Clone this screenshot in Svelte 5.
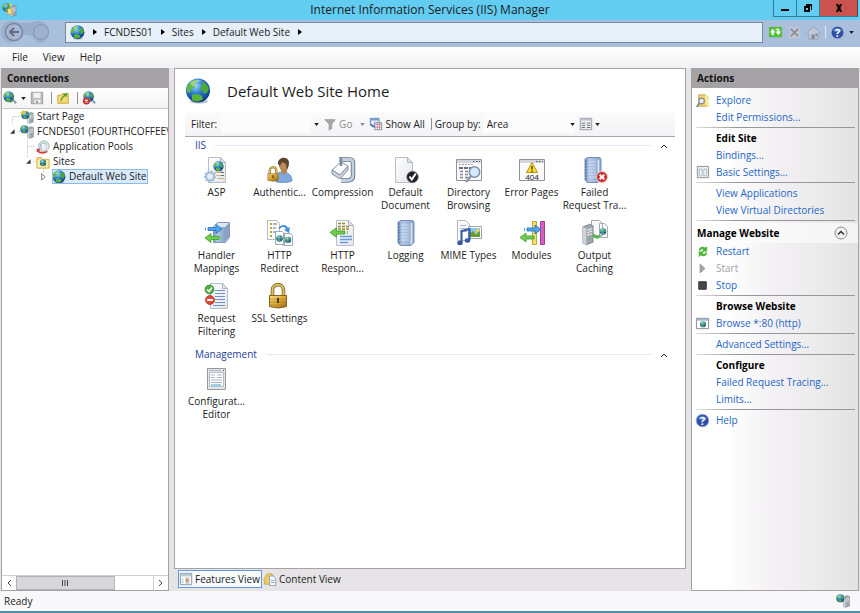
<script>
	let filter = $state('');
	let groupBy = $state('Area');
	let view = $state('features');

	const crumbs = ['FCNDES01', 'Sites', 'Default Web Site'];

	const tree = [
		{ label: 'Start Page', icon: 'start', level: 0, lines: 'M11.5 15V7.5H19' },
		{ label: 'FCNDES01 (FOURTHCOFFEE\\', icon: 'server', level: 0, lines: 'M17 7.5H20', open: true },
		{ label: 'Application Pools', icon: 'pools', level: 1, lines: 'M10.5 0V15M10.5 7.5H19' },
		{ label: 'Sites', icon: 'sites', level: 1, lines: 'M10.5 0V3M17 7.5H20', open: true },
		{ label: 'Default Web Site', icon: 'globe', level: 2, lines: 'M10.5 0V3', closed: true, selected: true }
	];

	const groups = [
		{
			name: 'IIS',
			items: [
				['ASP', 'asp'],
				['Authentic...', 'auth'],
				['Compression', 'compression'],
				['Default\nDocument', 'document'],
				['Directory\nBrowsing', 'directory'],
				['Error Pages', 'error'],
				['Failed\nRequest Tra...', 'failed'],
				['Handler\nMappings', 'handler'],
				['HTTP\nRedirect', 'redirect'],
				['HTTP\nRespon...', 'response'],
				['Logging', 'logging'],
				['MIME Types', 'mime'],
				['Modules', 'modules'],
				['Output\nCaching', 'caching'],
				['Request\nFiltering', 'filtering'],
				['SSL Settings', 'ssl']
			]
		},
		{ name: 'Management', items: [['Configurat...\nEditor', 'config']] }
	];

	const siteActions = [
		{ label: 'Explore', icon: 'explore' },
		{ label: 'Edit Permissions...' },
		{ line: true },
		{ title: 'Edit Site' },
		{ label: 'Bindings...' },
		{ label: 'Basic Settings...', icon: 'settings' },
		{ line: true },
		{ label: 'View Applications' },
		{ label: 'View Virtual Directories' },
		{ line: true }
	];

	const manageActions = [
		{ label: 'Restart', icon: 'restart' },
		{ label: 'Start', icon: 'play', disabled: true },
		{ label: 'Stop', icon: 'stop' },
		{ line: true },
		{ title: 'Browse Website' },
		{ label: 'Browse *:80 (http)', icon: 'browse' },
		{ line: true },
		{ label: 'Advanced Settings...' },
		{ line: true },
		{ title: 'Configure' },
		{ label: 'Failed Request Tracing...' },
		{ label: 'Limits...' },
		{ line: true },
		{ label: 'Help', icon: 'help' }
	];
</script>

{#snippet icon(name, size)}
	<svg class="icon {size}" aria-hidden="true">
		<use href="#{name}" />
		{#if name === 'error'}
			<text x="13" y="23" text-anchor="middle" font-size="8" fill="#202020">404</text>
		{:else if name === 'help'}
			<text x="7.500" y="11.500" text-anchor="middle" font-size="11" font-weight="700" fill="#fff">?</text>
		{/if}
	</svg>
{/snippet}

{#snippet caret()}
	<svg class="caret" viewBox="0 0 6 4" aria-hidden="true"><path d="M0 0h6L3 4z" fill="currentColor" /></svg>
{/snippet}

{#snippet actionList(rows)}
	<ul class="actions">
		{#each rows as row}
			{#if row.line}
				<li class="line"></li>
			{:else if row.title}
				<li class="action"><h3>{row.title}</h3></li>
			{:else}
				<li class="action">
					<span class="slot">
						{#if row.icon}{@render icon(row.icon, 'small')}{/if}
					</span>
					{#if row.disabled}
						<span class="disabled">{row.label}</span>
					{:else}
						<a href="#top">{row.label}</a>
					{/if}
				</li>
			{/if}
		{/each}
	</ul>
{/snippet}

<!-- Icon sprite -->
<svg class="sprite" width="0" height="0" aria-hidden="true">
	<defs>
		<radialGradient id="g-sea" cx=".4" cy=".3" r=".75">
			<stop offset="0" stop-color="#9fd8f7" />
			<stop offset=".45" stop-color="#2a78d0" />
			<stop offset="1" stop-color="#0b2f80" />
		</radialGradient>
		<linearGradient id="g-book" x2="1" y2="0">
			<stop offset="0" stop-color="#7f9cc4" />
			<stop offset=".3" stop-color="#b5c9e6" />
			<stop offset="1" stop-color="#86a2cb" />
		</linearGradient>
		<linearGradient id="g-gold" x2="1" y2="1">
			<stop offset="0" stop-color="#f8e08a" />
			<stop offset=".5" stop-color="#dca93a" />
			<stop offset="1" stop-color="#9a6c14" />
		</linearGradient>
		<linearGradient id="g-page" x2="1" y2="1">
			<stop offset="0" stop-color="#fff" />
			<stop offset="1" stop-color="#e3e6ee" />
		</linearGradient>
	</defs>
	<symbol id="globe" viewBox="0 0 26 26">
		<ellipse cx="14" cy="23.500" rx="9" ry="2" fill="#b8c4d2" />
		<circle cx="13" cy="12.500" r="12" fill="url(#g-sea)" />
		<path d="M4 6c3-4 7-5 9-4l-1 3-3 1 1 3-4 2-1 4-3-1c-1-3 0-6 2-8z" fill="#63bb3c" />
		<path d="M16 3c4 1 7 4 8 8l-2 4-3 1-1-3-3-1 1-4 2-2z" fill="#4caa3c" />
		<path d="M7 17c3-2 7-1 10 1l1 3c-3 3-8 3-11 1z" fill="#58b338" />
		<path d="M5 5c4-4 9-4 12-2-4 0-7 2-9 6z" fill="#fff" opacity=".35" />
	</symbol>
	<symbol id="page" viewBox="0 0 26 26">
		<path d="M4.500.5h12l5 5v20h-17z" fill="url(#g-page)" stroke="#b9bfc8" />
		<path d="M16.500.5v5h5z" fill="#dfe4ec" stroke="#b0b7c0" />
	</symbol>
	<symbol id="tower" viewBox="0 0 14 26">
		<path d="M1 4l8-3 4 2v19l-8 3-4-2z" fill="#9ea5ac" stroke="#646b72" stroke-width=".7" />
		<path d="M1 4l4 2v19l-4-2z" fill="#cfd4d8" />
		<path d="M6 8l6-2M6 11l6-2M6 14l6-2" stroke="#eef1f3" stroke-width="1.200" />
		<circle cx="9" cy="18" r="1" fill="#4cc83c" />
	</symbol>
	<symbol id="server" viewBox="0 0 16 16">
		<use href="#tower" x="8" y="1" width="8" height="15" />
		<use href="#globe" x="0" y="0" width="10" height="10" />
	</symbol>
	<symbol id="start" viewBox="0 0 16 16">
		<use href="#tower" x="8" y="2" width="8" height="14" />
		<use href="#globe" x="1" y="1" width="10" height="10" />
		<path d="M0 3l4-3 3 2-4 3z" fill="#f2c63b" />
	</symbol>
	<symbol id="pools" viewBox="0 0 16 16">
		<circle cx="9" cy="7" r="6" fill="#dfe9ec" stroke="#9bb0b4" />
		<path d="M4 5q4-4 8-1l-1 5-5 2z" fill="#96c8c0" />
		<use href="#page" x="5" y="3" width="8" height="10" />
		<path d="M1 12q6 5 12 1" stroke="#c9453f" stroke-width="2" fill="none" />
		<path d="M0 10l5 0-2 4z" fill="#c9453f" />
	</symbol>
	<symbol id="sites" viewBox="0 0 16 16">
		<path d="M1 3h5l1 2h8v10H1z" fill="#f3dd82" stroke="#cba94a" />
		<path d="M2 6h12v8H2z" fill="#fbefb0" />
		<use href="#globe" x="4" y="5" width="8" height="8" />
	</symbol>
	<symbol id="manager" viewBox="0 0 16 16">
		<use href="#globe" x="0" y="1" width="10" height="10" />
		<path d="M7 1l4 2-2 3z" fill="#f4ce3f" />
		<use href="#tower" x="8" y="3" width="8" height="13" />
		<path d="M6 7h4v6H6z" fill="#f5df78" stroke="#b99b35" stroke-width=".6" />
	</symbol>
	<symbol id="connect" viewBox="0 0 16 16">
		<path d="M10 9l5 5" stroke="#8ba0ac" stroke-width="2.500" />
		<use href="#globe" x="0" y="0" width="13" height="13" />
		<path d="M8 13l3-3" stroke="#3a9b4e" stroke-width="2" />
	</symbol>
	<symbol id="save" viewBox="0 0 16 16">
		<path d="M1.500 1.500h13v13h-13z" fill="#bdbdbf" stroke="#98989b" />
		<path d="M4 2h8v6H4zM5 10h7v4H5z" fill="#f2f2f3" />
		<path d="M7 11h2v3H7z" fill="#8b8b8e" />
	</symbol>
	<symbol id="up" viewBox="0 0 16 16">
		<path d="M2 5h4l1-2h7v11H2z" fill="#f4da72" stroke="#c9a03c" />
		<path d="M5 11c1-4 2-5 4-6L8 4l5-2-1 5-1-1c-3 1-4 3-5 6z" fill="#4ea52f" />
	</symbol>
	<symbol id="disconnect" viewBox="0 0 16 16">
		<path d="M10 9l5 5" stroke="#7fa3b5" stroke-width="2.500" />
		<use href="#globe" x="1" y="0" width="13" height="13" />
		<circle cx="5" cy="11.500" r="4" fill="#d03029" />
		<path d="M3.500 10l3 3m0-3l-3 3" stroke="#fff" stroke-width="1.300" />
	</symbol>
	<symbol id="asp" viewBox="0 0 26 26">
		<use href="#page" width="26" height="26" />
		<path d="M10 15.500h10M12 18.500h8M13 21.500h7" stroke="#c9b873" />
		<path d="M17 15.500h3M17 18.500h3" stroke="#5e6b7c" />
		<use href="#globe" x="9" y="4" width="11" height="11" />
		<circle cx="6" cy="19.500" r="4" fill="#e6eef6" stroke="#a3bcd4" stroke-width="2" />
		<circle cx="6" cy="19.500" r="5.300" fill="none" stroke="#a3bcd4" stroke-width="1.400" stroke-dasharray="2 1.600" />
	</symbol>
	<symbol id="padlock" viewBox="0 0 20 26">
		<path d="M4.500 14V7c0-7 11-7 11 0v7" fill="none" stroke="#7d6322" stroke-width="3.600" />
		<path d="M4.500 14V7c0-7 11-7 11 0v7" fill="none" stroke="#dcc068" stroke-width="2" />
		<path d="M1.500 12.500h17v11q-8 3-17 0z" fill="url(#g-gold)" stroke="#87601a" />
		<path d="M2 16h16M2 19h16M2 22h16" stroke="#a87a20" opacity=".6" />
		<path d="M9 15h2v5H9z" fill="#4f3a10" />
	</symbol>
	<symbol id="auth" viewBox="0 0 26 26">
		<path d="M9 25c-1-7 1-10 6-10s10 2 10 9c-4 2-12 2-16 1z" fill="#7fa8dc" stroke="#5a86be" stroke-width=".7" />
		<path d="M14 15l3 3 3-3v-3h-6z" fill="#b98252" />
		<ellipse cx="16.500" cy="8" rx="4.500" ry="6" fill="#c08a5a" />
		<path d="M11 7c-1-7 10-9 11-2 0 4-1 6-2 8l-1-6-4-2-2 4z" fill="#5b4430" />
		<use href="#padlock" x="0" y="9" width="12" height="16" />
	</symbol>
	<symbol id="compression" viewBox="0 0 26 26">
		<path d="M9 2.500h11q3 0 3 4v12q0 5-6 5h-6" fill="none" stroke="#617189" stroke-width="4.500" />
		<path d="M9 2.500h11q3 0 3 4v12q0 5-6 5h-6" fill="none" stroke="#c3d0e0" stroke-width="2.800" />
		<path d="M2 13l9-8 7 4-8 9z" fill="#fafafa" stroke="#8993a2" />
		<path d="M2 13l8 5 8-9v4l-8 9-8-5z" fill="#ccd2da" stroke="#8993a2" />
		<path d="M11 1v8" stroke="#7d8ca2" stroke-width="2.500" />
	</symbol>
	<symbol id="document" viewBox="0 0 26 26">
		<use href="#page" x="-2" width="26" height="26" />
		<circle cx="19.500" cy="20" r="5.800" fill="#202124" stroke="#7a7a7a" stroke-width=".6" />
		<path d="M16.500 19.500l2.300 3 4-6" fill="none" stroke="#fff" stroke-width="2" />
	</symbol>
	<symbol id="window" viewBox="0 0 26 26">
		<path d="M.5 2.500h25v21H.5z" fill="#fafafa" stroke="#8f959e" />
		<path d="M1 3h24v3H1z" fill="#d2d7de" />
		<path d="M17 4.500h1.500M20 4.500h1.500M23 4.500h1" stroke="#4e5662" stroke-width="1.200" />
	</symbol>
	<symbol id="directory" viewBox="0 0 26 26">
		<use href="#window" width="26" height="26" />
		<path d="M3 7.500h14" stroke="#a0a6ae" stroke-dasharray="2 1" />
		<path d="M3 11h12" stroke="#3c3f44" stroke-width="1.500" stroke-dasharray="4 1" />
		<path d="M4 14.500h3M9 14.500h3M4 17.500h3M9 17.500h3M4 20.500h3M9 20.500h3" stroke="#7b8796" stroke-width="1.600" />
		<path d="M15 19l-5 6" stroke="#8d97a5" stroke-width="2.500" />
		<circle cx="18.500" cy="15" r="5.200" fill="#d5e9fa" stroke="#7891b0" stroke-width="1.500" />
	</symbol>
	<symbol id="error" viewBox="0 0 26 26">
		<use href="#window" width="26" height="26" />
		<path d="M13 5.500l5.500 10h-11z" fill="#ffdc26" stroke="#b39412" stroke-linejoin="round" />
		<path d="M13 9v3.500M13 13.500v1.200" stroke="#222" stroke-width="1.300" />
	</symbol>
	<symbol id="logging" viewBox="0 0 26 26">
		<path d="M5 2l3-1.500h12l1 2v20l-3 3H7l-2-3z" fill="url(#g-book)" stroke="#7890b5" />
		<path d="M18.500 3v21" stroke="#dfe8f5" stroke-width="1.500" />
		<path d="M8 5h8M8 8h8M8 11h8M8 14h8M8 17h8M8 20h8" stroke="#dae5f5" opacity=".8" />
		<path d="M5 4h2M5 7h2M5 10h2M5 13h2M5 16h2M5 19h2M5 22h2" stroke="#4f6a92" />
	</symbol>
	<symbol id="failed" viewBox="0 0 26 26">
		<use href="#logging" x="-2" width="26" height="26" />
		<circle cx="20" cy="20" r="5.500" fill="#ca3030" stroke="#e9c6c6" />
		<path d="M17.700 17.700l4.600 4.600m0-4.600l-4.600 4.600" stroke="#fff" stroke-width="2" />
	</symbol>
	<symbol id="arrow-right" viewBox="0 0 18 10">
		<path d="M3 3.500h8v-3l6 4.500-6 4.500v-3H3z" fill="#4aa4ee" stroke="#2c6db4" stroke-width=".8" />
		<path d="M0 3.500h1v3H0z" fill="#4aa4ee" />
	</symbol>
	<symbol id="arrow-left" viewBox="0 0 18 10">
		<path d="M15 3.500H7v-3L1 5l6 4.500v-3h8z" fill="#6ed04c" stroke="#3e9a2c" stroke-width=".8" />
		<path d="M17 3.500h1v3h-1z" fill="#6ed04c" />
	</symbol>
	<symbol id="handler" viewBox="0 0 26 26">
		<path d="M9.500 6.500l4-4h12v15l-4 5h-12z" fill="#dbe4f1" stroke="#8496b2" />
		<path d="M10 7h11v15H10z" fill="url(#g-book)" />
		<path d="M21 7l4-4v14l-4 5z" fill="#8ba1c4" />
		<use href="#arrow-right" x="1" y="4" width="18" height="10" />
		<use href="#arrow-left" x="0" y="13" width="18" height="10" />
	</symbol>
	<symbol id="redirect" viewBox="0 0 26 26">
		<path d="M.5.500h9l3 3v16H.5z" fill="#fcfcfa" stroke="#b9bcc1" />
		<path d="M3 4h2M3 8h2M3 12h2M3 16h2" stroke="#bba63b" stroke-width="2" />
		<path d="M6 4h4M6 8h3M6 12h3" stroke="#5e6b7c" />
		<path d="M8.500 11.500h7l2 2v11h-9zM16.500 13.500h7l2 2v10h-9z" fill="#f9fafc" stroke="#9ea6b2" />
		<use href="#globe" x="9" y="15" width="7" height="7" />
		<use href="#globe" x="17.500" y="16.500" width="7" height="7" />
		<path d="M11 8c4-4 8-4 10 0l2-1-1 6-5-3 2-1c-2-3-4-3-6 0z" fill="#3f8fda" />
	</symbol>
	<symbol id="response" viewBox="0 0 26 26">
		<use href="#page" x="2" width="26" height="26" />
		<path d="M8 3.500h8M8 6.500h12M8 9h12" stroke="#a0862a" stroke-width="1.600" stroke-dasharray="3 1" />
		<path d="M10 16.500h12M10 19.500h12M10 22.500h8" stroke="#6a9ada" stroke-width="1.500" />
		<use href="#arrow-left" x="-1" y="7" width="19" height="11" />
	</symbol>
	<symbol id="mime" viewBox="0 0 26 26">
		<path d="M1.500.500h8l4 4v16h-12z" fill="#fafbfc" stroke="#b0b7c1" />
		<path d="M4 5.500h6M4 8.500h7M4 11.500h7" stroke="#a5b6cd" />
		<path d="M12.500 6.500h13v12h-13z" fill="#fff" stroke="#9ba4b0" />
		<path d="M14 8h10v5H14z" fill="#8ec6f1" />
		<path d="M14 13l3-2 3 3 4-3v6H14z" fill="#6a9c32" />
		<path d="M20 9h3v3h-3z" fill="#f0ce44" />
		<path d="M5.500 23V11l8-2v11" fill="none" stroke="#3459a9" stroke-width="2" />
		<ellipse cx="4" cy="23" rx="2.700" ry="2.200" fill="#3459a9" />
		<ellipse cx="11.500" cy="20.500" rx="2.700" ry="2.200" fill="#3459a9" />
	</symbol>
	<symbol id="modules" viewBox="0 0 26 26">
		<path d="M13.500 1.500h4v23h-4z" fill="#f4de6c" stroke="#c3a435" />
		<path d="M21.500 1.500h4v23h-4z" fill="#d560c2" stroke="#a33f95" />
		<use href="#arrow-right" x="5" y="4" width="18" height="11" />
		<use href="#arrow-left" x="0" y="12" width="18" height="11" />
	</symbol>
	<symbol id="caching" viewBox="0 0 26 26">
		<path d="M9.500.500h8l3 3v12h-11zM17.500 3.500h5l3 3v11h-8z" fill="#f7f8fa" stroke="#a4abb5" />
		<use href="#globe" x="17.500" y="8" width="7" height="7" />
		<use href="#tower" x="0" y="3" width="12" height="23" />
		<path d="M11 13l4 3 3-1 1 2-4 2-4-2z" fill="#53b848" />
	</symbol>
	<symbol id="filtering" viewBox="0 0 26 26">
		<use href="#page" x="2" width="26" height="26" />
		<path d="M11 7.500h10M11 10.500h10M11 13.500h10M11 16.500h10M11 19.500h10M9 22.500h12" stroke="#6f93c9" />
		<circle cx="5.500" cy="6.500" r="4.500" fill="#4fae43" stroke="#348230" stroke-width=".7" />
		<path d="M3.200 6.500l1.800 2 3-4" stroke="#fff" stroke-width="1.500" fill="none" />
		<circle cx="6" cy="17" r="4.500" fill="#df4a3a" stroke="#a5281d" stroke-width=".7" />
		<path d="M3.200 17h5.600" stroke="#fff" stroke-width="2" />
	</symbol>
	<symbol id="ssl" viewBox="0 0 26 26">
		<use href="#padlock" x="1" width="20" height="26" />
	</symbol>
	<symbol id="config" viewBox="0 0 26 26">
		<path d="M3.500 2.500h18v21h-18z" fill="#e5e7ea" stroke="#92989f" />
		<path d="M5.500 6.500h14v14h-14z" fill="#fff" stroke="#b5bbc4" />
		<path d="M5 4.500h12" stroke="#adb6c2" />
		<path d="M19 4.500h1" stroke="#444" />
		<path d="M7 9h4M13 9h5M7 11.500h4M13 11.500h5M7 14h11M7 16.500h11" stroke="#a9b5c8" />
		<path d="M7 19h10" stroke="#72c4dd" stroke-width="1.500" />
	</symbol>
	<symbol id="explore" viewBox="0 0 16 16">
		<path d="M4 2h7l3 3v9H4z" fill="#f0d674" stroke="#c8a640" />
		<path d="M11 2l4 4v8h-3z" fill="#f9ebaa" />
		<path d="M5 10l-3 5" stroke="#7c8490" stroke-width="2" />
		<circle cx="7" cy="8.500" r="3" fill="#e5edf2" stroke="#8b8d8c" stroke-width="1.300" />
	</symbol>
	<symbol id="settings" viewBox="0 0 16 16">
		<path d="M2.500 1.500h12v12h-12z" fill="#edf0f2" stroke="#8b9096" />
		<path d="M4.500 4.500h3v7h-3zM9.500 4.500h3v7h-3z" fill="#fff" stroke="#a9b4bf" />
	</symbol>
	<symbol id="restart" viewBox="0 0 16 16">
		<path d="M4 7c0-4 5-5 7-3l2-2v6H7l2-2c-2-1-3 0-3 1z" fill="#52b33a" />
		<path d="M13 9c0 4-5 5-7 3l-2 2V8h6l-2 2c2 1 3 0 3-1z" fill="#52b33a" />
	</symbol>
	<symbol id="play" viewBox="0 0 16 16">
		<path d="M5.500 3.500v9l5-4.500z" fill="#a5a6a9" stroke="#8d8e91" />
	</symbol>
	<symbol id="stop" viewBox="0 0 16 16">
		<path d="M4 4h8v8H4z" fill="#47484b" stroke="#2e2f31" />
	</symbol>
	<symbol id="browse" viewBox="0 0 16 16">
		<path d="M1.500 2.500h13v11h-13z" fill="#fff" stroke="#7a8797" />
		<path d="M2 3h12v2H2z" fill="#a8b7ca" />
		<use href="#globe" x="5" y="5.500" width="7" height="7" />
	</symbol>
	<symbol id="help" viewBox="0 0 16 16">
		<circle cx="8" cy="8" r="6.800" fill="#2c4fa8" stroke="#a9b8da" />
		<path d="M3 6a5.500 5 0 0 1 10 0q-5 3-10 0z" fill="#7f9ddb" opacity=".7" />
	</symbol>
	<symbol id="refresh" viewBox="0 0 16 16">
		<path d="M1 2h14v11H1z" fill="#54bd3a" />
		<path d="M2 8l3-4 3 4H6v3H4V8z" fill="#fff" />
		<path d="M14 7l-3 4-3-4h2V5H8V4h4v3z" fill="#fff" />
	</symbol>
	<symbol id="cancel" viewBox="0 0 16 16">
		<path d="M2 2h12v12H2z" fill="#c1c7d2" />
		<path d="M4 4l8 8m0-8l-8 8" stroke="#8d949f" stroke-width="2" />
	</symbol>
	<symbol id="home" viewBox="0 0 16 16">
		<path d="M1 8l7-6 7 6-2 1v6H3V9z" fill="#c3c9d2" stroke="#949ca9" stroke-width=".8" />
		<path d="M6 10h3v5H6zM10 9h2v3h-2z" fill="#7e8795" />
	</symbol>
	<symbol id="funnel" viewBox="0 0 16 16">
		<path d="M2 3h12l-4 5v5l-3 2V8z" fill="#a7a7aa" stroke="#8f8f93" stroke-width=".8" />
	</symbol>
	<symbol id="show-all" viewBox="0 0 16 16">
		<path d="M1.500 1.500h10v8h-10z" fill="#e4eefa" stroke="#5d7ba6" />
		<path d="M2 2h9v2H2z" fill="#6f9ad2" />
		<path d="M6.500 6.500h8v8h-8z" fill="#fff" stroke="#76818f" />
		<path d="M7 8.500h7M9.500 7v7M12 7v7M7 11.500h7" stroke="#c07d88" />
		<path d="M2 8q2 4 5 3" fill="none" stroke="#3a6fc0" stroke-width="1.500" />
	</symbol>
	<symbol id="views" viewBox="0 0 16 16">
		<path d="M1.500 1.500h13v13h-13z" fill="#eceff2" stroke="#8c9299" />
		<path d="M2 2h12v2H2z" fill="#bcc2ca" />
		<path d="M3 7h4M9 7h4M3 9.500h4M9 9.500h4M3 12h4M9 12h4" stroke="#5c6671" />
	</symbol>
	<symbol id="features" viewBox="0 0 16 16">
		<path d="M1.500 1.500h13v13h-13z" fill="#fff" stroke="#7a8797" />
		<path d="M2 2h12v3H2z" fill="#b7c8dd" />
		<path d="M3 7h2v6H3zM7 6h5v8H7z" fill="#ccd2da" />
		<path d="M8 8h3v3H8z" fill="#cf9c3d" />
	</symbol>
	<symbol id="content" viewBox="0 0 16 16">
		<path d="M1 8l4-6h5l2 3v9H2z" fill="#eecb62" stroke="#c39b3b" stroke-width=".8" />
		<path d="M7.500 4.500h4l3 3v8h-7z" fill="#f7f8fb" stroke="#8b9bb5" />
		<path d="M9 9.500h4M9 12h4" stroke="#7896c8" />
	</symbol>
</svg>

<div class="window" id="top">
	<header class="titlebar">
		<span class="app-icon">{@render icon('manager', 'small')}</span>
		<h1>Internet Information Services (IIS) Manager</h1>
		<div class="window-buttons">
			<button aria-label="Minimize">
				<svg viewBox="0 0 10 10"><path d="M1 6h8v2H1z" /></svg>
			</button>
			<button aria-label="Restore">
				<svg viewBox="0 0 10 10"><path d="M3 1h6v6H8V3H3zM1 3h6v6H1zM3 5v2h2V5z" fill-rule="evenodd" /></svg>
			</button>
			<button class="close" aria-label="Close">
				<svg viewBox="0 0 10 10"><path d="M2 1h2l1 2 1-2h2L6.300 5 8 9H6L5 7 4 9H2l1.700-4z" /></svg>
			</button>
		</div>
	</header>

	<div class="address-row">
		<svg class="history" viewBox="0 0 48 24" aria-hidden="true">
			<path d="M13 1q11 4 22 0a11 11 0 0 1 4 22q-4-1-8-7-7-3-14 0-4 6-8 7A11 11 0 0 1 13 1z" fill="#9bafcd" />
			<circle cx="13" cy="12" r="8.500" fill="#a8b7cf" stroke="#7385a0" stroke-width="1.500" />
			<circle cx="40" cy="12" r="7.500" fill="#9fb1cd" stroke="#8497b5" />
			<path d="M18 12H9m4-4l-4 4 4 4" fill="none" stroke="#5e6f89" stroke-width="2" />
		</svg>
		<nav class="address" aria-label="Address">
			{@render icon('globe', 'small')}
			{#each crumbs as crumb}
				<svg class="arrow" viewBox="0 0 4 6"><path d="M0 0v6l4-3z" /></svg>
				<a href="#top">{crumb}</a>
			{/each}
			<svg class="arrow" viewBox="0 0 4 6"><path d="M0 0v6l4-3z" /></svg>
		</nav>
		<div class="address-tools">
			<button aria-label="Refresh">{@render icon('refresh', 'small')}</button>
			<button aria-label="Stop">{@render icon('cancel', 'small')}</button>
			<button aria-label="Home">{@render icon('home', 'small')}</button>
			<span class="divider light"></span>
			<button class="with-caret" aria-label="Help">{@render icon('help', 'small')}{@render caret()}</button>
		</div>
	</div>

	<nav class="menu" aria-label="Menu">
		<button>File</button>
		<button>View</button>
		<button>Help</button>
	</nav>

	<main>
		<section class="panel connections">
			<h2>Connections</h2>
			<div class="tree-tools">
				<button class="with-caret" aria-label="Create new connection">
					{@render icon('connect', 'tiny')}{@render caret()}
				</button>
				<button aria-label="Save">{@render icon('save', 'tiny')}</button>
				<span class="divider"></span>
				<button aria-label="Up">{@render icon('up', 'tiny')}</button>
				<span class="divider"></span>
				<button aria-label="Disconnect">{@render icon('disconnect', 'tiny')}</button>
			</div>
			<ul class="tree">
				{#each tree as node}
					<li class="level-{node.level}">
						<svg class="branch" viewBox="0 0 20 15" aria-hidden="true">
							<path d={node.lines} fill="none" stroke="#b5b5b8" stroke-dasharray="1 1" />
							{#if node.open}
								<path d="M14 5v5H9z" fill="#333" />
							{:else if node.closed}
								<path d="M8.500 4.500v7l4-3.500z" fill="#fff" stroke="#777" />
							{/if}
						</svg>
						<button class="node" class:selected={node.selected}>
							{@render icon(node.icon, 'tiny')}
							<span>{node.label}</span>
						</button>
					</li>
				{/each}
			</ul>
			<div class="scrollbar">
				<button aria-label="Scroll left">
					<svg viewBox="0 0 8 8"><path d="M6 1L3 4l3 3" /></svg>
				</button>
				<div class="track">
					<div class="thumb">
						<svg viewBox="0 0 8 8"><path d="M1.500 1v6M4 1v6M6.500 1v6" /></svg>
					</div>
				</div>
				<button aria-label="Scroll right">
					<svg viewBox="0 0 8 8"><path d="M2 1l3 3-3 3" /></svg>
				</button>
			</div>
		</section>

		<section class="center">
			<div class="home">
				<div class="home-title">
					{@render icon('globe', 'large')}
					<h2>Default Web Site Home</h2>
				</div>
				<div class="toolbar">
					<label for="filter">Filter:</label>
					<input id="filter" type="text" bind:value={filter} />
					<button class="drop" aria-label="Filter history">{@render caret()}</button>
					<button class="go" disabled>{@render icon('funnel', 'tiny')}<span>Go</span>{@render caret()}</button>
					<button class="show-all">{@render icon('show-all', 'tiny')}<span>Show All</span></button>
					<span class="divider"></span>
					<label for="group-by">Group by:</label>
					<span class="select">
						<select id="group-by" bind:value={groupBy}>
							<option>Area</option>
							<option>Category</option>
							<option>No Grouping</option>
						</select>
						{@render caret()}
					</span>
					<button class="views" aria-label="Views">{@render icon('views', 'tiny')}{@render caret()}</button>
				</div>
				{#each groups as group}
					<div class="group">
						<div class="group-head">
							<h3>{group.name}</h3>
							<span class="rule"></span>
							<button aria-label="Collapse {group.name}">
								<svg viewBox="0 0 8 8"><path d="M1 6l3-3 3 3" /></svg>
							</button>
						</div>
						<div class="features">
							{#each group.items as [label, name]}
								<button class="feature">
									{@render icon(name, 'large')}
									<span>{label}</span>
								</button>
							{/each}
						</div>
					</div>
				{/each}
			</div>
			<div class="tabs">
				<button class:active={view === 'features'} onclick={() => (view = 'features')}>
					{@render icon('features', 'tiny')}<span>Features View</span>
				</button>
				<button class:active={view === 'content'} onclick={() => (view = 'content')}>
					{@render icon('content', 'tiny')}<span>Content View</span>
				</button>
			</div>
		</section>

		<section class="panel action-pane">
			<h2>Actions</h2>
			{@render actionList(siteActions)}
			<div class="manage">
				<h3>Manage Website</h3>
				<button aria-label="Collapse Manage Website">
					<svg viewBox="0 0 14 14">
						<circle cx="7" cy="7" r="6" fill="#f0f0f1" stroke="#8d8d90" />
						<path d="M4 8.500l3-3 3 3" fill="none" stroke="#333" stroke-width="1.500" />
					</svg>
				</button>
			</div>
			{@render actionList(manageActions)}
		</section>
	</main>

	<footer>
		<span>Ready</span>
		{@render icon('server', 'tiny')}
	</footer>
</div>

<style>
	:global(body) {
		margin: 0;
	}

	.window {
		display: flex;
		flex-direction: column;
		min-height: 100vh;
		box-sizing: border-box;
		border-bottom: 2px solid #4b8ea8;
		background: #f6f5f6;
		color: #1c1c1c;
		font-family: 'Open Sans', 'Noto Sans', sans-serif;
		font-size: 10px;
		line-height: 13px;
	}

	.sprite {
		display: block;
	}

	h1,
	h2,
	h3,
	ul {
		margin: 0;
		padding: 0;
		font-size: inherit;
		list-style: none;
	}

	button {
		display: flex;
		align-items: center;
		padding: 0;
		border: 0;
		background: none;
		color: inherit;
		font: inherit;
		white-space: nowrap;
	}

	.icon {
		flex: none;
		display: block;
	}

	.tiny {
		width: 14px;
		height: 14px;
	}

	.small {
		width: 15px;
		height: 15px;
	}

	.large {
		width: 26px;
		height: 26px;
	}

	.caret {
		flex: none;
		width: 5px;
		height: 3px;
	}

	.divider {
		width: 1px;
		height: 12px;
		background: #8f8f93;
	}

	.divider.light {
		background: #e3ebf5;
	}

	/* Title bar */
	.titlebar {
		display: grid;
		grid-template-columns: 1fr auto 1fr;
		height: 20px;
		background: #62ccf1;
	}

	.app-icon {
		padding: 2px;
	}

	h1 {
		font-size: 12px;
		font-weight: 400;
		line-height: 20px;
	}

	.window-buttons {
		display: flex;
		justify-content: flex-end;
		align-items: flex-start;
		padding-right: 2px;
	}

	.window-buttons button {
		justify-content: center;
		width: 23px;
		height: 17px;
		box-sizing: border-box;
		border: 1px solid #2f7d9a;
		border-top: 0;
		border-right: 0;
	}

	.window-buttons svg {
		width: 10px;
		height: 10px;
	}

	.window-buttons .close {
		width: 39px;
		border-right: 1px solid #6b3a3c;
		background: #c9544f;
	}

	/* Address row */
	.address-row {
		display: flex;
		align-items: center;
		box-sizing: border-box;
		height: 27px;
		padding: 0 6px 3px 1px;
		background: #a9bfdc;
	}

	.history {
		width: 48px;
		height: 24px;
		margin-right: 16px;
	}

	.address {
		flex: 1;
		display: flex;
		align-items: center;
		height: 19px;
		padding-left: 4px;
		border: 1px solid #77879d;
		background: #e7eff8;
	}

	.address a {
		color: inherit;
		text-decoration: none;
	}

	.arrow {
		width: 4px;
		height: 6px;
		margin: 0 7px 0 8px;
	}

	.address-tools {
		display: flex;
		align-items: center;
		gap: 4px;
		margin-left: 5px;
	}

	.with-caret {
		gap: 4px;
	}

	/* Menu */
	.menu {
		display: flex;
		gap: 15px;
		height: 21px;
		padding-left: 12px;
		background: linear-gradient(#fff, #f1f0f2);
	}

	/* Main area */
	main {
		flex: 1;
		display: grid;
		grid-template-columns: 168px 1fr 168px;
		gap: 5px;
		padding: 0 1px;
		background: #e6e4e7;
	}

	.panel {
		display: flex;
		flex-direction: column;
		min-width: 0;
		box-sizing: border-box;
		border: 1px solid #a4a2a5;
		background: #fff;
	}

	.panel > h2 {
		height: 19px;
		padding-left: 5px;
		background: #a4a2a5;
		color: #111;
		line-height: 19px;
	}

	.tree-tools {
		display: flex;
		align-items: center;
		gap: 4px;
		height: 20px;
		padding-left: 1px;
		border-bottom: 1px solid #c6c5c8;
		background: linear-gradient(#fff, #f3f2f4);
	}

	.tree-tools .divider {
		margin-left: 3px;
	}

	.tree {
		flex: 1;
		overflow: hidden;
	}

	.tree li {
		display: flex;
		align-items: center;
		height: 15px;
	}

	.level-1 {
		padding-left: 16px;
	}

	.level-2 {
		padding-left: 32px;
	}

	.branch {
		flex: none;
		width: 18px;
		height: 15px;
	}

	.node {
		gap: 3px;
		box-sizing: border-box;
		height: 15px;
		padding-right: 2px;
	}

	.node.selected {
		background: #d8eafb;
		outline: 1px solid #8fbbe8;
		outline-offset: -1px;
	}

	.scrollbar {
		display: flex;
		height: 14px;
		background: #fff;
		border-top: 1px solid #d0d0d2;
	}

	.scrollbar button {
		justify-content: center;
		width: 14px;
	}

	.scrollbar svg {
		width: 8px;
		height: 8px;
		fill: none;
		stroke: #444;
	}

	.track {
		flex: 1;
		border-right: 1px solid #d0d0d2;
	}

	.thumb {
		display: flex;
		align-items: center;
		justify-content: center;
		box-sizing: border-box;
		width: 72%;
		height: 14px;
		border: 1px solid #b3b3b6;
		background: #d7d7d9;
	}

	/* Feature list */
	.center {
		display: flex;
		flex-direction: column;
		min-width: 0;
	}

	.home {
		flex: 1;
		padding: 0 10px;
		border: 1px solid #a4a2a5;
		background: #fff;
	}

	.home-title {
		display: flex;
		align-items: center;
		gap: 16px;
		height: 42px;
		padding-top: 1px;
	}

	.home-title h2 {
		font-size: 15px;
		font-weight: 400;
		line-height: 26px;
	}

	.toolbar {
		display: flex;
		align-items: center;
		height: 24px;
		padding-left: 6px;
		border-bottom: 1px solid #a9a8ab;
		background: linear-gradient(#fcfbfc, #f3f2f4);
	}

	input,
	select {
		appearance: none;
		box-sizing: border-box;
		height: 18px;
		margin: 0;
		padding: 0 4px;
		border: 0;
		border-radius: 0;
		background: #fcfcfd;
		color: inherit;
		font: inherit;
	}

	input {
		width: 89px;
		margin-left: 4px;
	}

	.drop {
		justify-content: center;
		width: 13px;
		height: 18px;
	}

	.go {
		gap: 2px;
		color: #8b8b8e;
	}

	.go .caret {
		margin: 0 4px 0 6px;
	}

	.show-all {
		gap: 2px;
		margin-right: 6px;
	}

	.toolbar .divider {
		margin-right: 3px;
	}

	.select {
		display: grid;
		grid-template-columns: 1fr auto;
		align-items: center;
		width: 92px;
		margin-left: 2px;
	}

	select {
		grid-area: 1 / 1 / 2 / 3;
		width: 100%;
	}

	.select .caret {
		grid-area: 1 / 2;
		pointer-events: none;
	}

	.views {
		gap: 2px;
		margin-left: 4px;
	}

	.group-head {
		display: flex;
		align-items: center;
		gap: 9px;
		height: 17px;
		padding: 0 7px 0 10px;
	}

	.group-head h3 {
		color: #24409a;
		font-weight: 400;
	}

	.group-head .rule {
		flex: 1;
		height: 1px;
		background: #e3e8f4;
	}

	.group-head svg {
		width: 8px;
		height: 8px;
		fill: none;
		stroke: #222;
	}

	.features {
		display: grid;
		grid-template-columns: repeat(auto-fill, 63px);
		row-gap: 8px;
		padding: 3px 0 8px;
	}

	.feature {
		flex-direction: column;
		gap: 3px;
		white-space: pre;
	}

	/* View tabs */
	.tabs {
		display: flex;
		height: 22px;
		padding: 1px 4px;
		box-sizing: border-box;
	}

	.tabs button {
		gap: 2px;
		box-sizing: border-box;
		height: 18px;
		padding: 0 1px 0 0;
		border: 1px solid transparent;
	}

	.tabs .active {
		border-color: #5f9bdc;
		background: #f7fbff;
	}

	/* Actions */
	.action-pane {
		background: linear-gradient(90deg, #fff 20%, #f3f1f3 50%, #ebeaeb 80%, #e3e2e3);
	}

	.actions:first-of-type {
		padding-top: 4px;
	}

	.action {
		display: grid;
		grid-template-columns: 24px 1fr;
		align-items: center;
		height: 17px;
	}

	.action h3 {
		grid-column: 2;
		color: #000;
	}

	.action a {
		color: #2366c8;
		text-decoration: none;
	}

	.slot {
		padding-left: 3px;
	}

	.disabled {
		color: #a3a3a6;
	}

	.line {
		height: 1px;
		margin: 1px 3px 2px 4px;
		background: linear-gradient(90deg, #e0e0e1, #98989b 25%);
	}

	.manage {
		display: flex;
		align-items: center;
		justify-content: space-between;
		height: 20px;
		padding: 0 10px 0 5px;
		background: linear-gradient(90deg, #fff, #f5f4f5);
		color: #000;
	}

	.manage svg {
		width: 14px;
		height: 14px;
	}

	/* Status bar */
	footer {
		display: flex;
		align-items: center;
		justify-content: space-between;
		height: 20px;
		padding: 0 10px 0 4px;
		background: #f8f7f9;
	}
</style>
